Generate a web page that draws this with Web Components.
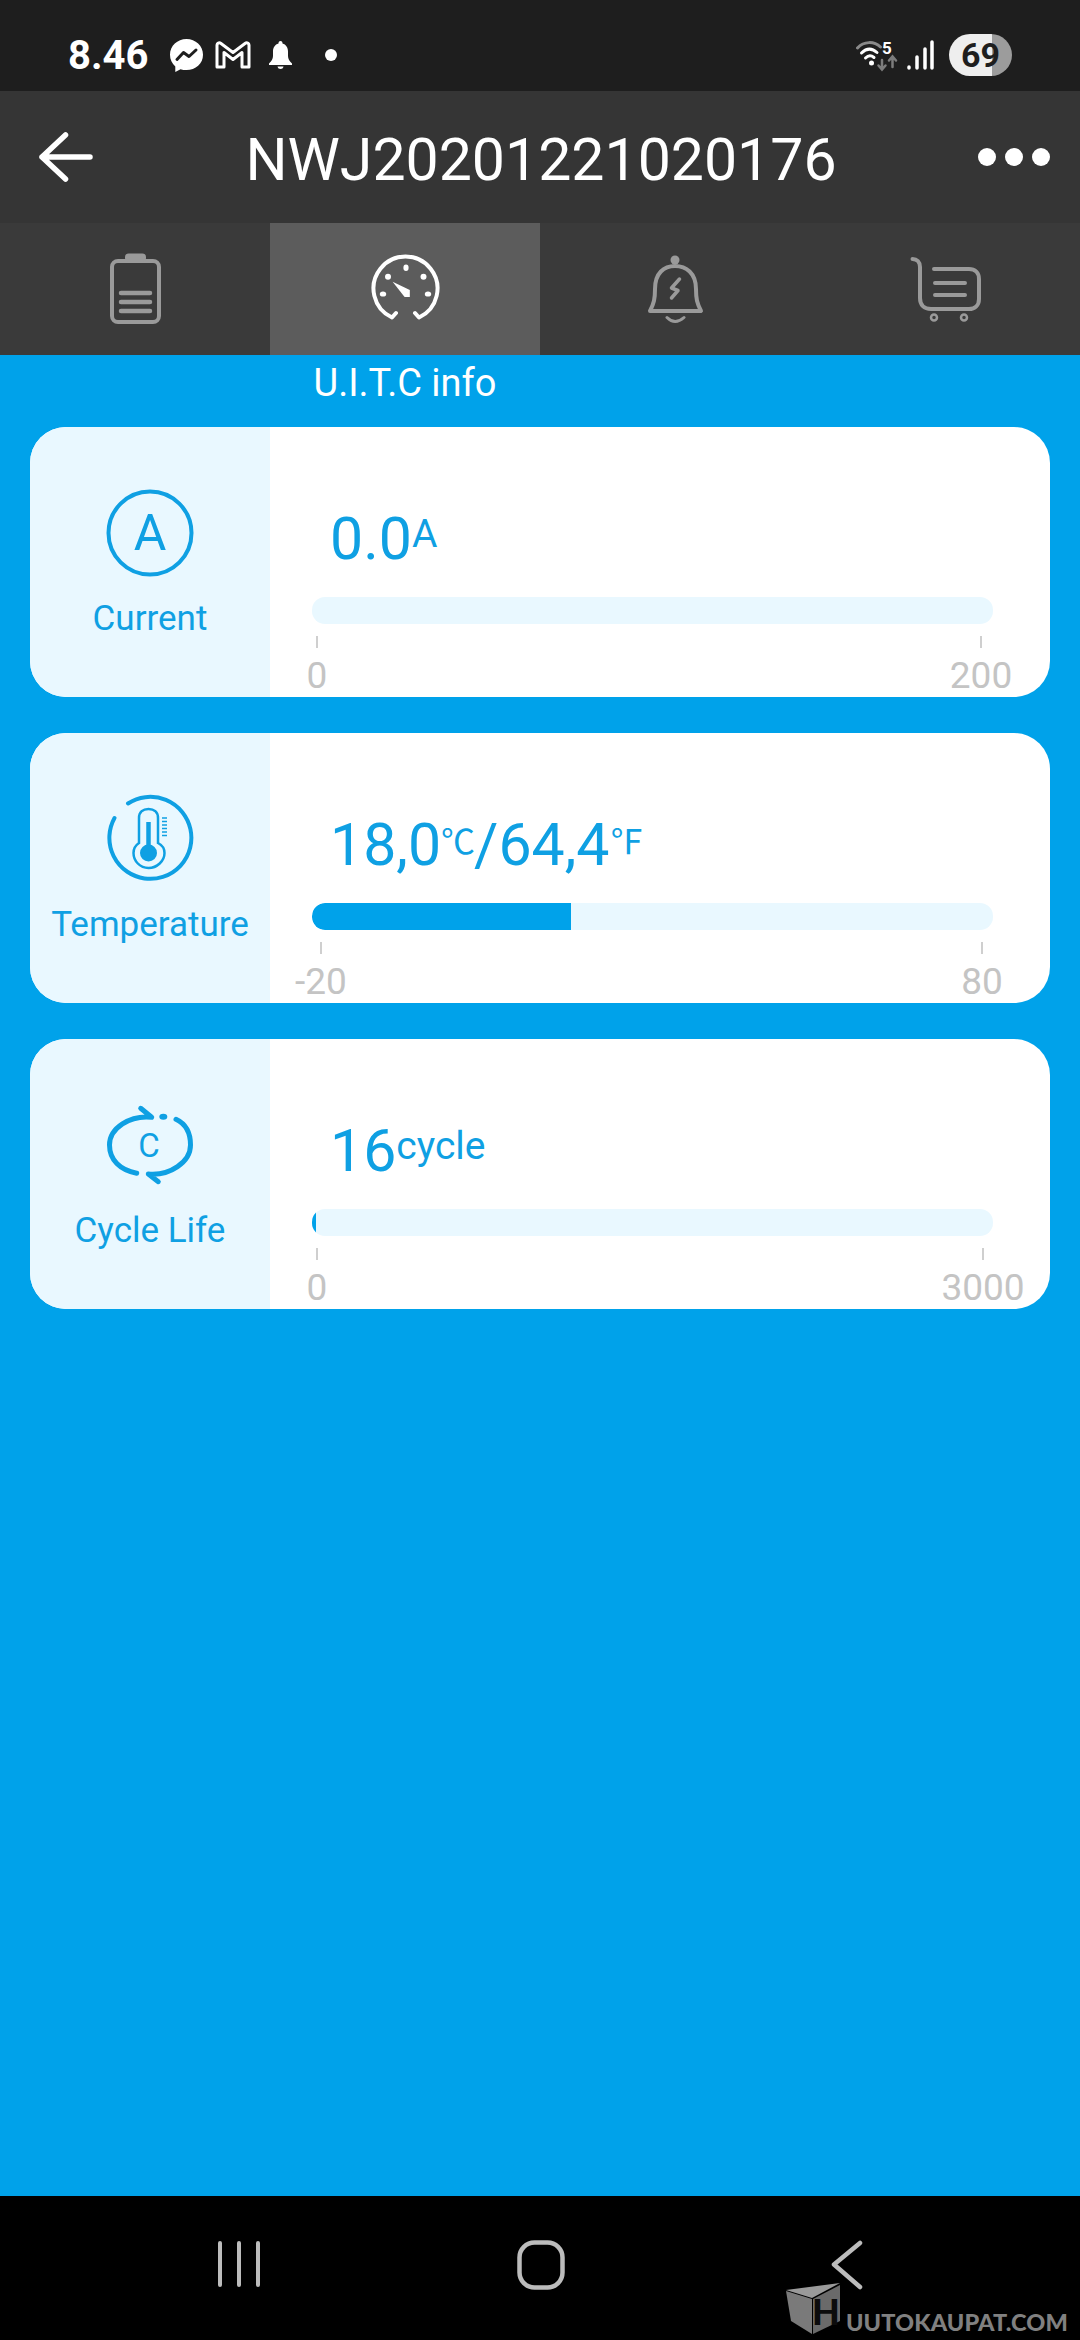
<!DOCTYPE html>
<html>
<head>
<meta charset="utf-8">
<title>U.I.T.C info</title>
<style>
  html, body { margin: 0; padding: 0; }
  body { width: 1080px; height: 2340px; overflow: hidden; font-family: Roboto, "Noto Sans", sans-serif; display: flex; flex-direction: column; }
</style>
</head>
<body>
<status-bar></status-bar>
<title-bar heading="NWJ20201221020176"></title-bar>
<tab-bar>
  <tab-item>
    <svg width="72" height="72" viewBox="0 0 72 72" fill="none" stroke="currentColor" stroke-width="4">
      <rect x="13" y="8" width="47" height="61" rx="6"/>
      <rect x="28" y="2.500" width="17" height="4" rx="1.500" fill="currentColor"/>
      <path d="M22 40H51M22 49H51M22 58H51" stroke-width="4.500" stroke-linecap="round"/>
    </svg>
  </tab-item>
  <tab-item active>
    <svg width="72" height="72" viewBox="0 0 72 72" fill="none" stroke="currentColor" stroke-width="4" stroke-linecap="round" stroke-linejoin="round">
      <path d="M27 60L23 64.500A32 32 0 1 1 50 64.500L46 60"/>
      <g fill="currentColor" stroke="none">
        <ellipse cx="37" cy="14.700" rx="2.600" ry="3.200"/>
        <circle cx="19" cy="23.700" r="3"/>
        <circle cx="54.500" cy="23.700" r="3"/>
        <ellipse cx="14" cy="41" rx="3.200" ry="2.600"/>
        <ellipse cx="59" cy="41" rx="3.200" ry="2.600"/>
        <path d="M23.600 28.700L40.800 37V44H35.600Z"/>
      </g>
    </svg>
  </tab-item>
  <tab-item>
    <svg width="72" height="72" viewBox="0 0 72 72" fill="none" stroke="currentColor" stroke-width="4" stroke-linecap="round" stroke-linejoin="round">
      <circle cx="36" cy="7" r="4.500" fill="currentColor" stroke="none"/>
      <path d="M11 58C15 50 16 46 16 36C16 20 25 13 36 13C47 13 57 20 57 36C57 46 58 50 62 58Z"/>
      <path d="M28 64.500Q36 72.500 45 64.500" stroke-width="3"/>
      <path d="M40.500 26L32.500 35L39 37.500L32.500 45" stroke-width="3.500"/>
    </svg>
  </tab-item>
  <tab-item>
    <svg width="72" height="72" viewBox="0 0 72 72" fill="none" stroke="currentColor" stroke-width="4" stroke-linecap="round" stroke-linejoin="round">
      <path d="M3.500 6C8 6 11 9 11 14V45C11 52 15 56 22 56H60C66 56 70 52 70 46V26C70 20 66 16 60 16H25"/>
      <path d="M26 30H56M26 42H56"/>
      <circle cx="25" cy="64.500" r="3" stroke-width="2.500"/>
      <circle cx="55" cy="64.500" r="3" stroke-width="2.500"/>
    </svg>
  </tab-item>
</tab-bar>
<info-page caption="U.I.T.C info">
  <info-card label="Current" fill="0" min="0" max="200" min-at="4" max-at="11">
    <svg slot="icon" width="90" height="90" viewBox="0 0 90 90" fill="none" stroke="currentColor">
      <circle cx="45" cy="45" r="41.500" stroke-width="4"/>
      <text x="45" y="62" text-anchor="middle" font-family="Roboto" font-size="50" fill="currentColor" stroke="none">A</text>
    </svg>
    <span slot="value">0.0<unit-text>A</unit-text></span>
  </info-card>
  <info-card label="Temperature" fill="38" min="-20" max="80" min-at="8" max-at="10">
    <svg slot="icon" width="90" height="90" viewBox="0 0 90 90" fill="none" stroke="currentColor" stroke-width="3">
      <path d="M23 9.500A41 41 0 1 1 9.500 24" stroke-width="4" stroke-linecap="round"/>
      <path d="M34 24C34 18 38 15 43.500 15C49 15 53 18 53 24V49C57 51 59.500 55 59.500 59C59.500 67 52 74 43.500 74C35 74 28.500 67 28.500 59C28.500 55 31 51 34 49Z" stroke-width="2.500"/>
      <path d="M43.500 28V55" stroke-width="4.500"/>
      <circle cx="43.500" cy="59" r="8.500" fill="currentColor" stroke="none"/>
      <path d="M57 24H62M57 27.500H62M57 31H62M57 34.500H62M57 38H62M57 41.500H62" stroke-width="1.600"/>
    </svg>
    <span slot="value">18,0<unit-text wide>℃</unit-text>/64,4<unit-text wide>℉</unit-text></span>
  </info-card>
  <info-card label="Cycle Life" fill="0.6" min="0" max="3000" min-at="4" max-at="9">
    <svg slot="icon" width="90" height="90" viewBox="0 0 90 90" fill="none" stroke="currentColor" stroke-width="5" stroke-linecap="round" stroke-linejoin="round">
      <path d="M35.700 8.300L46.700 17.300C25 15 4.500 28 4.500 45C4.500 60 15 70 31.700 73.300"/>
      <path d="M71 19.300C81 24 85.500 34 85.500 45C85.500 62 65 76 43.300 74L53.300 81.700"/>
      <ellipse cx="58.300" cy="16.700" rx="4" ry="3" fill="currentColor" stroke="none"/>
      <text x="44" y="57" text-anchor="middle" font-family="Roboto" font-size="33" fill="currentColor" stroke="none">C</text>
    </svg>
    <span slot="value">16<unit-text>cycle</unit-text></span>
  </info-card>
</info-page>
<nav-bar></nav-bar>

<script>
class StatusBar extends HTMLElement {
  constructor() {
    super();
    this.attachShadow({mode: 'open'}).innerHTML = `
      <style>
        :host { display: flex; align-items: flex-start; height: 91px; background: #1e1e1e; color: #fff; flex: none; position: relative; }
        .time { font: 700 40px/1 Roboto, sans-serif; position: relative; margin: 36px 0 0 68px; width: 102px; }
        svg { display: block; flex: none; }
        .msg { margin-top: 39px; }
        .gm { margin: 41px 0 0 12px; }
        .bell { margin: 41px 0 0 18px; }
        .dot { width: 12px; height: 12px; border-radius: 50%; background: #fff; margin: 49px 0 0 33px; }
        .right { margin-left: auto; display: flex; align-items: flex-start; padding-right: 68px; }
        .wifi { margin-top: 37px; }
        .bars { margin: 40px 0 0 9px; }
        .batt { width: 63px; height: 42px; margin: 34px 0 0 15px; border-radius: 21px; background: linear-gradient(90deg, #eeeeee 43px, #9c9c9c 43px); color: #1e1e1e; font: 700 34px/42px Roboto, sans-serif; text-align: center; }
      </style>
      <div class="time">8.46</div>
      <svg class="msg" width="33" height="33" viewBox="0 0 33 33">
        <path fill="#fff" d="M16.500 0C7.400 0 0 6.800 0 15.800C0 20.500 2 24.600 5.300 27.500V33L10.500 30.200C12.400 30.800 14.400 31.100 16.500 31.100C25.600 31.100 33 24.800 33 15.800C33 6.800 25.600 0 16.500 0Z"/>
        <path fill="none" stroke="#1e1e1e" stroke-width="3" stroke-linejoin="round" stroke-linecap="round" d="M7 20.500L13.500 13.500L19 17.500L26 11"/>
      </svg>
      <svg class="gm" width="36" height="28" viewBox="0 0 36 28">
        <path fill="none" stroke="#fff" stroke-width="3" stroke-linejoin="round" d="M2 4C2 2.300 4 1 6 2.500L18 11.500L30 2.500C32 1 34 2.300 34 4V26H27V11.500L18 18.500L9 11.500V26H2Z"/>
      </svg>
      <svg class="bell" width="23" height="28" viewBox="0 0 23 28">
        <path fill="#fff" d="M11.500 0C10 0 9.500 1 9.500 2.500C6 3.500 4 6.500 4 10.500V15C4 18 2.500 20 0 22.500V24H23V22.500C20.500 20 19 18 19 15V10.500C19 6.500 17 3.500 13.500 2.500C13.500 1 13 0 11.500 0Z"/>
        <path fill="#fff" d="M8.500 25.500H14.500C14 27.300 13 28 11.500 28C10 28 9 27.300 8.500 25.500Z"/>
      </svg>
      <div class="dot"></div>
      <div class="right">
        <svg class="wifi" width="42" height="35" viewBox="0 -3 42 35" fill="none" stroke-linecap="round">
          <path d="M1.500 8C8 1 18 1 24.500 7" stroke="#8a8a8a" stroke-width="3"/>
          <path d="M5.500 13C10.500 8 16 8 21 12.500" stroke="#fff" stroke-width="3"/>
          <path d="M9.500 18C12.500 15 15 15 18 17.500" stroke="#fff" stroke-width="3"/>
          <circle cx="15.500" cy="23" r="2.500" fill="#fff"/>
          <text x="26" y="14" font-family="Roboto" font-weight="700" font-size="17" fill="#fff">5</text>
          <path d="M26 20V29M22.500 25.500L26 29.500L29.500 25.500" stroke="#7c7c7c" stroke-width="2.500"/>
          <path d="M36.500 27V17M33 20.500L36.500 16.500L40 20.500" stroke="#7c7c7c" stroke-width="2.500"/>
        </svg>
        <svg class="bars" width="27" height="30" viewBox="0 0 27 30" stroke="#fff" stroke-width="3.500" stroke-linecap="round">
          <path d="M2 27V28M10 17V28M18 9V28M25 2V28"/>
        </svg>
        <div class="batt">69</div>
      </div>`;
  }
}
customElements.define('status-bar', StatusBar);

class TitleBar extends HTMLElement {
  constructor() {
    super();
    this.attachShadow({mode: 'open'}).innerHTML = `
      <style>
        :host { display: grid; grid-template-columns: 1fr auto 1fr; align-items: center; height: 132px; padding: 0 30px 0 32px; background: #353535; color: #fff; flex: none; }
        svg { display: block; margin-left: 7px; }
        h1 { margin: 0; font: 400 59px/1 Roboto, sans-serif; position: relative; top: 2px; }
        .more { display: flex; gap: 9px; justify-content: flex-end; }
        .more span { width: 18px; height: 18px; border-radius: 50%; background: #fff; }
      </style>
      <svg width="54" height="50" viewBox="0 0 54 50" fill="none" stroke="#fff" stroke-width="5.500" stroke-linecap="round" stroke-linejoin="round">
        <path d="M3 25H51M26.500 3L3 25L26.500 47"/>
      </svg>
      <h1>${this.getAttribute('heading')}</h1>
      <div class="more"><span></span><span></span><span></span></div>`;
  }
}
customElements.define('title-bar', TitleBar);

class TabBar extends HTMLElement {
  constructor() {
    super();
    this.attachShadow({mode: 'open'}).innerHTML = `
      <style>
        :host { display: grid; grid-template-columns: repeat(4, 270px); height: 132px; background: #3a3a3a; flex: none; }
      </style>
      <slot></slot>`;
  }
}
customElements.define('tab-bar', TabBar);

class TabItem extends HTMLElement {
  constructor() {
    super();
    this.attachShadow({mode: 'open'}).innerHTML = `
      <style>
        :host { display: flex; align-items: center; justify-content: center; color: #9a9a9a; }
        :host([active]) { background: #5c5c5c; color: #fff; }
      </style>
      <slot></slot>`;
  }
}
customElements.define('tab-item', TabItem);

class InfoPage extends HTMLElement {
  constructor() {
    super();
    this.attachShadow({mode: 'open'}).innerHTML = `
      <style>
        :host { display: block; flex: 1; background: #00a2ea; }
        .caption { width: 270px; margin-left: 270px; height: 54px; margin-bottom: 18px; color: #fff; font: 400 38px/56px Roboto, sans-serif; text-align: center; }
        .cards { display: flex; flex-direction: column; gap: 36px; padding: 0 30px; }
      </style>
      <div class="caption">${this.getAttribute('caption')}</div>
      <div class="cards"><slot></slot></div>`;
  }
}
customElements.define('info-page', InfoPage);

class InfoCard extends HTMLElement {
  constructor() {
    super();
    const fill = this.getAttribute('fill');
    const minAt = this.getAttribute('min-at');
    const maxAt = this.getAttribute('max-at');
    this.attachShadow({mode: 'open'}).innerHTML = `
      <style>
        :host { display: grid; grid-template-columns: 240px 1fr; height: 270px; background: #fff; border-radius: 36px; overflow: hidden; color: #0fa0e3; font-family: Roboto, "Noto Sans CJK SC", sans-serif; }
        .side { background: #e9f8ff; display: flex; flex-direction: column; align-items: center; padding-top: 61px; }
        .side ::slotted(svg) { display: block; }
        .icon { height: 90px; }
        .label { margin-top: 21px; font-size: 35px; line-height: 40px; }
        .main { padding: 78px 57px 0 42px; }
        .value { padding-left: 18px; font-size: 59px; line-height: 68px; height: 68px; white-space: nowrap; }
        .bar { margin-top: 24px; height: 27px; background: #e9f8ff; border-radius: 13px; overflow: hidden; }
        .fill { height: 100%; background: #00a2ea; border-radius: 13px 0 0 13px; width: ${fill}%; }
        .scale { display: flex; justify-content: space-between; margin-top: 12px; padding: 0 ${maxAt}px 0 ${minAt}px; }
        .mark { width: 2px; display: flex; flex-direction: column; align-items: center; color: #c4c4c4; font-size: 37px; line-height: 40px; }
        .tick { width: 2px; height: 12px; background: #cfcfcf; flex: none; margin-bottom: 8px; }
      </style>
      <div class="side">
        <div class="icon"><slot name="icon"></slot></div>
        <div class="label">${this.getAttribute('label')}</div>
      </div>
      <div class="main">
        <div class="value"><slot name="value"></slot></div>
        <div class="bar"><div class="fill"></div></div>
        <div class="scale">
          <div class="mark"><div class="tick"></div><span>${this.getAttribute('min')}</span></div>
          <div class="mark"><div class="tick"></div><span>${this.getAttribute('max')}</span></div>
        </div>
      </div>`;
  }
}
customElements.define('info-card', InfoCard);

class UnitText extends HTMLElement {
  constructor() {
    super();
    this.attachShadow({mode: 'open'}).innerHTML = `<style>
        :host { display: inline; font-size: 39px; position: relative; top: -12px; }
        :host([wide]) { font-size: 34px; font-family: "Noto Sans CJK SC", sans-serif; letter-spacing: -1px; top: -11px; }
      </style><slot></slot>`;
  }
}
customElements.define('unit-text', UnitText);

class NavBar extends HTMLElement {
  constructor() {
    super();
    this.attachShadow({mode: 'open'}).innerHTML = `
      <style>
        :host { display: grid; grid-template-columns: 1fr; height: 144px; background: #000; flex: none; position: relative; }
        .keys { display: flex; align-items: flex-start; padding: 44px 0 0 217px; color: #bcbcbc; }
        .keys svg { display: block; flex: none; }
        .home { margin-left: 256px; }
        .back { margin-left: 266px; }
        .brand { position: absolute; left: 785px; top: 87px; display: flex; align-items: center; color: #808080; }
        .brand span { font: 900 23.500px/1 Lato, sans-serif; margin: 28px 0 0 5px; letter-spacing: 0.1px; white-space: nowrap; }
      </style>
      <div class="keys">
        <svg width="44" height="48" viewBox="0 0 44 48" stroke="currentColor" stroke-width="4" stroke-linecap="round" fill="none">
          <path d="M3 3V45M22 3V45M41 3V45"/>
        </svg>
        <svg class="home" width="48" height="50" viewBox="0 0 48 50" fill="none" stroke="currentColor" stroke-width="4.500">
          <rect x="2.500" y="2.500" width="43" height="45" rx="15"/>
        </svg>
        <svg class="back" width="32" height="50" viewBox="0 0 32 50" fill="none" stroke="currentColor" stroke-width="4.500" stroke-linecap="round" stroke-linejoin="round">
          <path d="M29 3L3 24.500L29 47"/>
        </svg>
      </div>
      <div class="brand">
        <svg width="56" height="52" viewBox="0 0 56 52">
          <path fill="#9a9a9a" d="M1 7L55 0L27 15Z"/>
          <path fill="#7a7a7a" d="M1 8L27 16V51L6 38Z"/>
          <path fill="#6a6a6a" d="M28 16L55 2V38L28 51Z"/>
          <text x="41" y="42" text-anchor="middle" font-family="Lato" font-weight="900" font-size="36" fill="#0c0c0c">H</text>
        </svg>
        <span>UUTOKAUPAT.COM</span>
      </div>`;
  }
}
customElements.define('nav-bar', NavBar);
</script>
</body>
</html>
